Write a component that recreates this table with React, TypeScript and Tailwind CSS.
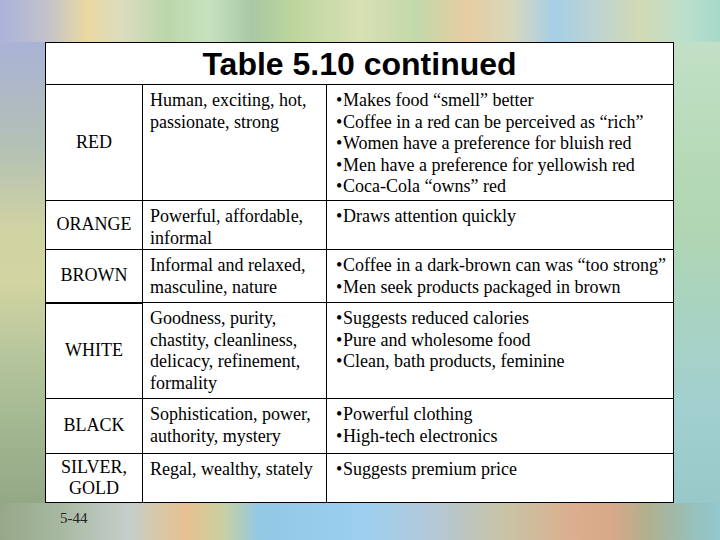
type Row = {
  color: string[];
  traits: string[];
  notes: string[];
  h: string;
  thick?: boolean;
};

const rows: Row[] = [
  {
    color: ["RED"],
    traits: ["Human, exciting, hot,", "passionate, strong"],
    notes: [
      "Makes food \u201csmell\u201d better",
      "Coffee in a red can be perceived as \u201crich\u201d",
      "Women have a preference for bluish red",
      "Men have a preference for yellowish red",
      "Coca-Cola \u201cowns\u201d red",
    ],
    h: "h-[116px]",
  },
  {
    color: ["ORANGE"],
    traits: ["Powerful, affordable,", "informal"],
    notes: ["Draws attention quickly"],
    h: "h-[49px]",
  },
  {
    color: ["BROWN"],
    traits: ["Informal and relaxed,", "masculine, nature"],
    notes: [
      "Coffee in a dark-brown can was \u201ctoo strong\u201d",
      "Men seek products packaged in brown",
    ],
    h: "h-[53px]",
  },
  {
    color: ["WHITE"],
    traits: [
      "Goodness, purity,",
      "chastity, cleanliness,",
      "delicacy, refinement,",
      "formality",
    ],
    notes: [
      "Suggests reduced calories",
      "Pure and wholesome food",
      "Clean, bath products, feminine",
    ],
    h: "h-[96px]",
    thick: true,
  },
  {
    color: ["BLACK"],
    traits: ["Sophistication, power,", "authority, mystery"],
    notes: ["Powerful clothing", "High-tech electronics"],
    h: "h-[55px]",
  },
  {
    color: ["SILVER,", "GOLD"],
    traits: ["Regal, wealthy, stately"],
    notes: ["Suggests premium price"],
    h: "h-[49px]",
  },
];

function TableRow({ row }: { row: Row }) {
  return (
    <div
      className={`grid grid-cols-[97px_184px_1fr] border-t border-black ${row.h}`}
    >
      <div
        className={`flex flex-col items-center justify-center border-r border-black text-center ${
          row.thick ? "border-t-2 -mt-px" : ""
        }`}
      >
        {row.color.map((c) => (
          <span key={c}>{c}</span>
        ))}
      </div>
      <div className="flex flex-col border-r border-black pl-[7px] pt-[5px]">
        {row.traits.map((t) => (
          <span key={t} className="whitespace-nowrap">
            {t}
          </span>
        ))}
      </div>
      <div className="flex flex-col pl-[9px] pt-[5px]">
        {row.notes.map((n) => (
          <span key={n} className="flex whitespace-nowrap">
            <span className="w-[7px]">{"\u2022"}</span>
            {n}
          </span>
        ))}
      </div>
    </div>
  );
}

export default function App() {
  return (
    <div className="flex h-[540px] w-[720px] flex-col overflow-hidden bg-[#a8c0b0]">
      {/* top band of the slide background */}
      <div className="h-[42px] w-full bg-[linear-gradient(to_right,#aab2da_0%,#c4c4c8_7%,#ead8a0_12%,#dcdcc0_17%,#bcd6aa_23%,#c6e2be_29%,#a8c8a4_35%,#bed69e_41%,#d8e0b4_50%,#c2d8aa_58%,#e8cca2_65%,#d8d8bc_71%,#a6cee6_77%,#bed4d2_83%,#d2dab4_89%,#bce0cc_95%,#a6d8ca_100%)]" />

      <div className="flex h-[461px]">
        <div className="w-[45px] bg-[linear-gradient(to_bottom,#aab2d6_0%,#b2c0b6_22%,#cfd2a2_40%,#d2d4a2_52%,#b6c69c_68%,#a0b690_85%,#94a886_100%)]" />

        <div className="flex w-[629px] flex-col border border-black bg-white font-[family-name:'Liberation_Serif',serif] text-[18px] leading-[21.5px] text-black">
          <div className="flex h-[41px] items-center justify-center pt-[2px] font-[family-name:'Liberation_Sans',Arial,sans-serif] text-[32px] font-bold">
            Table 5.10 continued
          </div>
          {rows.map((r) => (
            <TableRow key={r.color.join(" ")} row={r} />
          ))}
        </div>

        <div className="flex-1 bg-[linear-gradient(to_bottom,#c2e0c6_0%,#b6dab8_25%,#b0d6b2_40%,#a8d2c2_60%,#a2d0d0_80%,#98c8c8_100%)]" />
      </div>

      <div className="flex-1 bg-[linear-gradient(to_right,#96a886_0%,#a6b8a0_8%,#c6cecc_18%,#d8c8a8_22%,#e8c090_26%,#c8d0a2_31%,#92c8e4_36%,#9ccff0_50%,#b2c8d8_60%,#c8c4a6_70%,#dcae8e_80%,#d8a888_85%,#b0b090_90%,#98c0b8_96%,#92c8d0_100%)] pl-[60px] pt-[4px] font-[family-name:'Liberation_Serif',serif] text-[15px] text-[#222]">
        5-44
      </div>
    </div>
  );
}
